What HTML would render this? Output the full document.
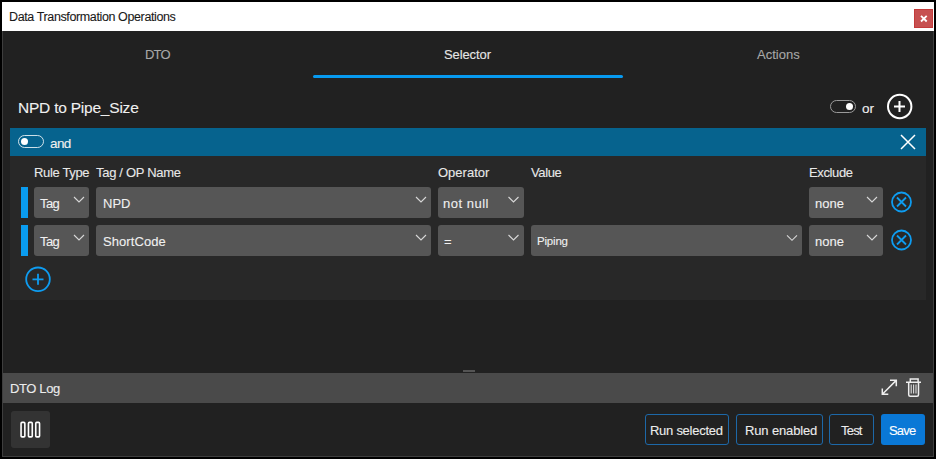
<!DOCTYPE html>
<html><head><meta charset="utf-8">
<style>
*{box-sizing:border-box;margin:0;padding:0}
html,body{width:936px;height:459px;overflow:hidden;background:#000;font-family:"Liberation Sans",sans-serif;}
.a{position:absolute}
.t{position:absolute;line-height:1;white-space:nowrap;-webkit-text-stroke:0.1px currentColor}
#title{left:2px;top:2px;width:932px;height:29px;background:#fff}
#win{left:2px;top:31px;width:932px;height:426px;background:#212121;border:1px solid #3e3e3e;border-top:none}
.sel{position:absolute;background:#565656;border-radius:3px}
.chev{position:absolute;width:11px;height:6px}
</style></head><body>
<!-- title bar -->
<div id="title" class="a"></div>
<div class="t" style="left:9px;top:11px;font-size:12.5px;color:#1a1a1a;letter-spacing:-0.38px">Data Transformation Operations</div>
<div class="a" style="left:914px;top:9px;width:19px;height:19px;background:#c75050;border:1px solid #c43b3b"></div>
<svg class="a" style="left:914px;top:9px" width="19" height="19" viewBox="0 0 19 19"><path d="M7 6.8L12.7 12.5M12.7 6.8L7 12.5" stroke="#fff" stroke-width="1.8"/></svg>

<div id="win" class="a"></div>

<!-- tabs -->
<div class="t" style="left:145px;top:48px;font-size:13px;color:#a8a8a8;letter-spacing:-0.8px">DTO</div>
<div class="t" style="left:444px;top:48px;font-size:13px;color:#e6e6e6;letter-spacing:-0.1px">Selector</div>
<div class="t" style="left:757px;top:48px;font-size:13px;color:#a8a8a8;letter-spacing:0px">Actions</div>
<div class="a" style="left:313px;top:75px;width:310px;height:3px;background:#079af0;border-radius:1.5px"></div>

<!-- header -->
<div class="t" style="left:18px;top:100px;font-size:15.5px;color:#f0f0f0;letter-spacing:-0.22px">NPD to Pipe_Size</div>
<div class="a" style="left:830px;top:100px;width:26px;height:13px;border:1.6px solid #9a9a9a;border-radius:7px"></div>
<div class="a" style="left:846px;top:103px;width:7px;height:7px;background:#fff;border-radius:50%"></div>
<div class="t" style="left:862px;top:102px;font-size:13.5px;color:#f0f0f0;letter-spacing:0px">or</div>
<svg class="a" style="left:886px;top:93px" width="27" height="27" viewBox="0 0 27 27"><circle cx="13.7" cy="13.5" r="11.7" fill="none" stroke="#fff" stroke-width="2"/><path d="M8 13.5H19M13.5 8V19" stroke="#fff" stroke-width="2"/></svg>

<!-- group bar -->
<div class="a" style="left:10px;top:128px;width:916px;height:28px;background:#06638e"></div>
<div class="a" style="left:18px;top:135px;width:26px;height:13px;border:1px solid rgba(255,255,255,0.8);border-radius:7px"></div>
<div class="a" style="left:21px;top:138px;width:7px;height:7px;background:#fff;border-radius:50%"></div>
<div class="t" style="left:50px;top:137px;font-size:13.5px;color:#f0f0f0;letter-spacing:-0.6px">and</div>
<svg class="a" style="left:900px;top:134px" width="16" height="16" viewBox="0 0 16 16"><path d="M1 1L15 15M15 1L1 15" stroke="#fff" stroke-width="1.5"/></svg>

<!-- panel -->
<div class="a" style="left:10px;top:156px;width:916px;height:144px;background:#282828"></div>

<div class="t" style="left:34px;top:166px;font-size:13px;color:#e8e8e8;letter-spacing:-0.34px">Rule Type</div>
<div class="t" style="left:96px;top:166px;font-size:13px;color:#e8e8e8;letter-spacing:-0.3px">Tag / OP Name</div>
<div class="t" style="left:438px;top:166px;font-size:13px;color:#e8e8e8;letter-spacing:0px">Operator</div>
<div class="t" style="left:531px;top:166px;font-size:13px;color:#e8e8e8;letter-spacing:-0.37px">Value</div>
<div class="t" style="left:809px;top:166px;font-size:13px;color:#e8e8e8;letter-spacing:-0.38px">Exclude</div>

<!-- row 1 -->
<div class="a" style="left:21px;top:187px;width:7px;height:31px;background:#0a9cf0"></div>
<div class="sel" style="left:34px;top:187px;width:55px;height:31px"></div>
<div class="sel" style="left:96px;top:187px;width:335px;height:31px"></div>
<div class="sel" style="left:438px;top:187px;width:86px;height:31px"></div>
<div class="sel" style="left:809px;top:187px;width:74px;height:31px"></div>
<div class="t" style="left:40px;top:197px;font-size:13px;color:#f0f0f0;letter-spacing:-0.6px">Tag</div>
<div class="t" style="left:103px;top:197px;font-size:13px;color:#f0f0f0;letter-spacing:0px">NPD</div>
<div class="t" style="left:443px;top:197px;font-size:13px;color:#f0f0f0;letter-spacing:0.5px">not null</div>
<div class="t" style="left:815px;top:197px;font-size:13px;color:#f0f0f0;letter-spacing:0px">none</div>

<!-- row 2 -->
<div class="a" style="left:21px;top:225px;width:7px;height:31px;background:#0a9cf0"></div>
<div class="sel" style="left:34px;top:225px;width:55px;height:31px"></div>
<div class="sel" style="left:96px;top:225px;width:335px;height:31px"></div>
<div class="sel" style="left:438px;top:225px;width:86px;height:31px"></div>
<div class="sel" style="left:531px;top:225px;width:271px;height:31px"></div>
<div class="sel" style="left:809px;top:225px;width:74px;height:31px"></div>
<div class="t" style="left:40px;top:235px;font-size:13px;color:#f0f0f0;letter-spacing:-0.6px">Tag</div>
<div class="t" style="left:103px;top:235px;font-size:13px;color:#f0f0f0;letter-spacing:0.08px">ShortCode</div>
<div class="t" style="left:444px;top:235px;font-size:13px;color:#f0f0f0;letter-spacing:0px">=</div>
<div class="t" style="left:537px;top:236px;font-size:11.5px;color:#f0f0f0;letter-spacing:-0.2px">Piping</div>
<div class="t" style="left:815px;top:235px;font-size:13px;color:#f0f0f0;letter-spacing:0px">none</div>

<!-- chevrons -->
<svg class="a" style="left:0;top:0" width="936" height="459" viewBox="0 0 936 459">
<g fill="none" stroke="#d8d8d8" stroke-width="1.1">
<path d="M74 197L79 202L84 197"/>
<path d="M416 197L421 202L426 197"/>
<path d="M508.5 197L513.5 202L518.5 197"/>
<path d="M867 197L872 202L877 197"/>
<path d="M74 235L79 240L84 235"/>
<path d="M416 235L421 240L426 235"/>
<path d="M508.5 235L513.5 240L518.5 235"/>
<path d="M787 235.3L792 240.3L797 235.3"/>
<path d="M867 235L872 240L877 235"/>
</g>
<g fill="none" stroke="#0e9cf0" stroke-width="1.8">
<circle cx="901.5" cy="202" r="9.5"/>
<path d="M897 197.5L906 206.5M906 197.5L897 206.5"/>
<circle cx="901.5" cy="240" r="9.5"/>
<path d="M897 235.5L906 244.5M906 235.5L897 244.5"/>
<circle cx="38" cy="279.3" r="11.8"/>
<path d="M32.5 279.3H43.5M38 273.8V284.8"/>
</g>
</svg>

<!-- splitter grip -->
<div class="a" style="left:463px;top:370px;width:12px;height:2px;background:#545454"></div>

<!-- DTO log bar -->
<div class="a" style="left:3px;top:373px;width:930px;height:30px;background:#4a4a4a"></div>
<div class="t" style="left:10px;top:382px;font-size:13px;color:#ececec;letter-spacing:-0.37px">DTO Log</div>
<svg class="a" style="left:880px;top:378px" width="44" height="20" viewBox="0 0 44 20">
<g fill="none" stroke="#eee" stroke-width="1.5">
<path d="M2.6 16L16.2 2.4M10 2.3H16.3V8.3M2.3 10.5V16.2H8.3"/>
<path d="M26 4.3H41M30.3 4.3V0.9H38.1V4.3M28.7 4.3V16.8Q28.7 18.3 30.2 18.3H37Q38.5 18.3 38.5 16.8V4.3"/>
</g>
<g stroke="#ddd" stroke-width="1.1"><path d="M31.2 6.5V15.6M33.6 6.5V15.6M36 6.5V15.6"/></g>
</svg>

<!-- bottom bar -->
<div class="a" style="left:11px;top:411px;width:39px;height:37px;background:#333;border-radius:3px"></div>
<svg class="a" style="left:11px;top:411px" width="39" height="37" viewBox="0 0 39 37">
<g fill="none" stroke="#fff" stroke-width="1.6">
<rect x="10.05" y="11.4" width="3.8" height="14.5" rx="1"/>
<rect x="17.46" y="11.4" width="3.8" height="14.5" rx="1"/>
<rect x="24.76" y="11.4" width="3.8" height="14.5" rx="1"/>
</g></svg>

<div class="a" style="left:645px;top:414px;width:84px;height:31px;border:1px solid #1d68a8;border-radius:3px"></div>
<div class="a" style="left:736px;top:414px;width:87px;height:31px;border:1px solid #1d68a8;border-radius:3px"></div>
<div class="a" style="left:829px;top:414px;width:45px;height:31px;border:1px solid #1d68a8;border-radius:3px"></div>
<div class="a" style="left:881px;top:414px;width:44px;height:31px;background:#0a78d6;border-radius:3px"></div>
<div class="t" style="left:650px;top:424px;font-size:13px;color:#ececec;letter-spacing:-0.27px">Run selected</div>
<div class="t" style="left:745px;top:424px;font-size:13px;color:#ececec;letter-spacing:-0.14px">Run enabled</div>
<div class="t" style="left:841px;top:424px;font-size:13px;color:#ececec;letter-spacing:-0.8px">Test</div>
<div class="t" style="left:889px;top:424px;font-size:13px;color:#fff;letter-spacing:-0.8px">Save</div>
</body></html>
